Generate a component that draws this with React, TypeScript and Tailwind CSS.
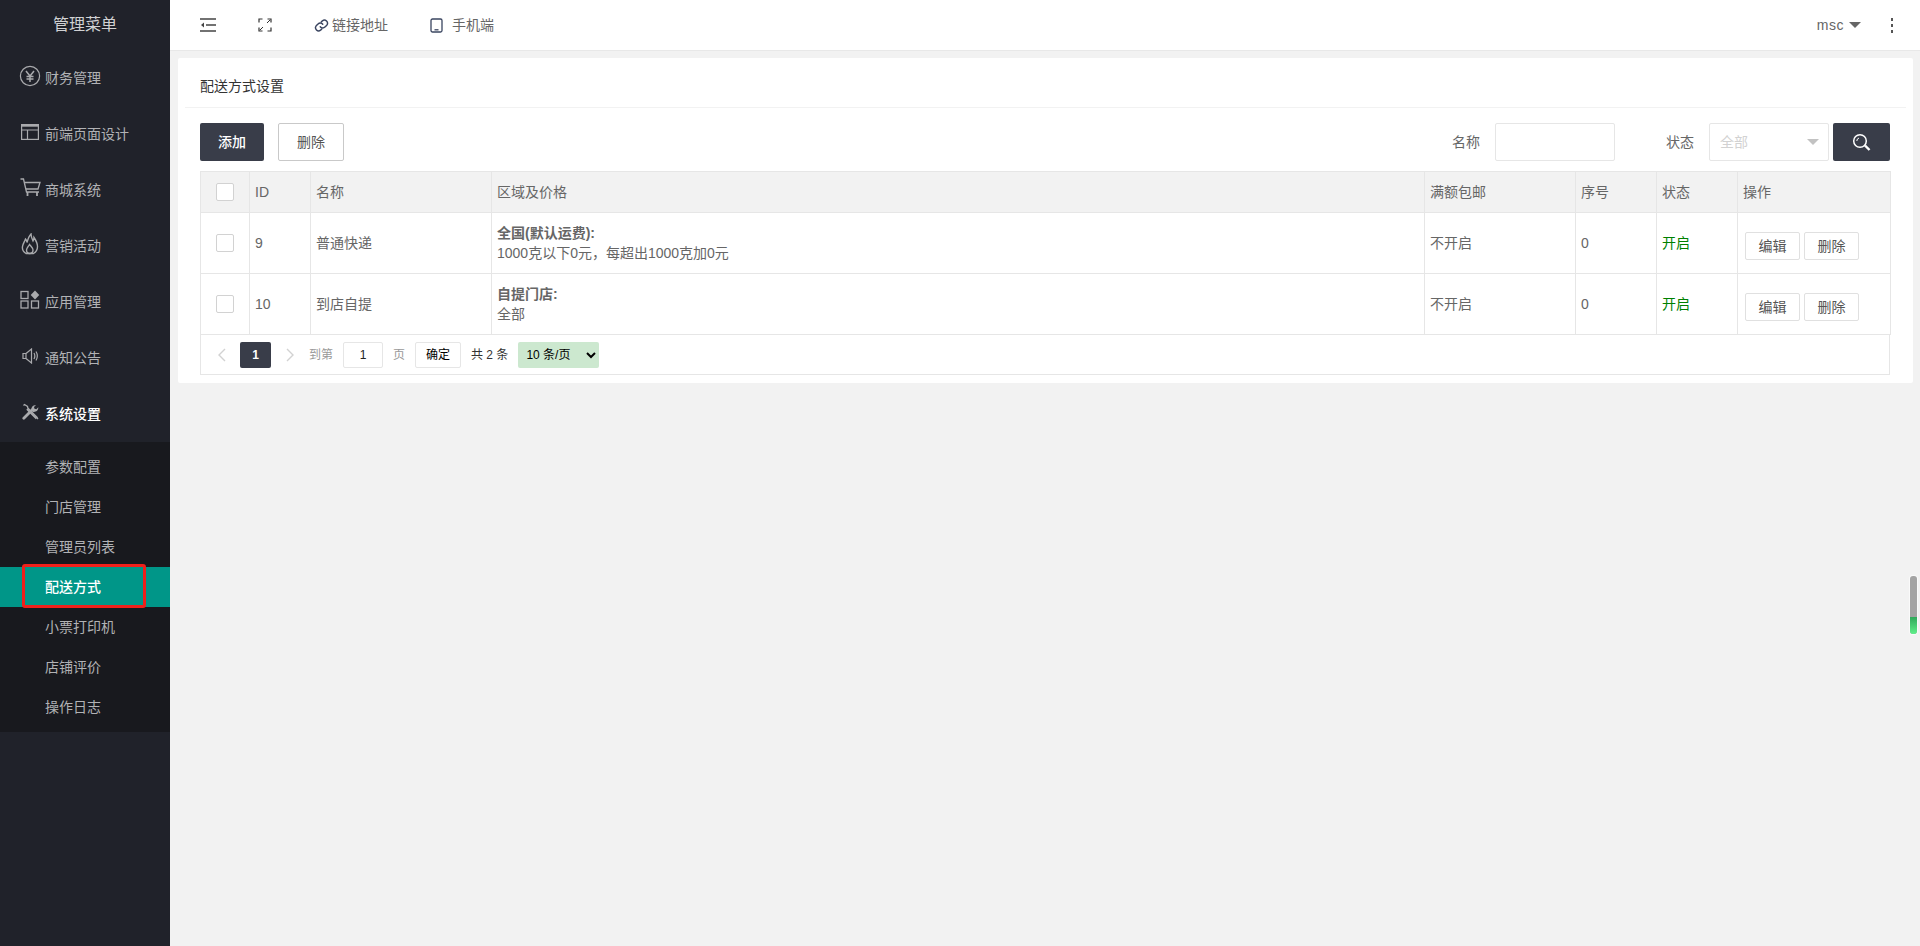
import * as React from "react";

const icons: Record<string, React.ReactNode> = {
  yen: (
    <svg width="22" height="22" viewBox="0 0 22 22" fill="none" stroke="currentColor" strokeWidth="1.2">
      <circle cx="11" cy="11" r="9.6" />
      <path d="M7 6l4 5 4-5M11 11v6M7.5 11.5h7M7.5 14h7" strokeWidth="1.5" />
    </svg>
  ),
  window: (
    <svg width="20" height="18" viewBox="0 0 20 18" fill="none" stroke="currentColor" strokeWidth="1.2">
      <rect x="1.6" y="1.6" width="16.8" height="14.8" />
      <path d="M1.6 2.5h16.8" strokeWidth="2.4" />
      <path d="M1.6 7h16.8M7.5 7v9.4" />
    </svg>
  ),
  cart: (
    <svg width="21" height="19" viewBox="0 0 21 19" fill="none" stroke="currentColor" strokeWidth="1.3">
      <path d="M0.5 1h3l3 13h12.500" />
      <path d="M4.500 4.500H20l-2 6.500H6" />
      <path d="M7.500 14v4M17 14v4" strokeWidth="1.800" />
    </svg>
  ),
  flame: (
    <svg width="18" height="22" viewBox="0 0 18 22" fill="none" stroke="currentColor" strokeWidth="1.4">
      <path d="M5 20.500C2.500 19 1 16.500 1.500 13.500 2 10.500 3.500 9 4.500 6c1 1 1.500 2 1.500 3.500C7 6 8 3 10 1c0 3 1 5 2 7 .5-1 1-2 1-3.500 2 3 3.500 5.500 3.500 9 0 3-1.500 5.500-4 7z" />
      <path d="M5.500 17c0-2 1.500-3 3-5.500 1.500 2 3.500 3.500 3.500 5.500 0 2-1.500 3.500-3.300 3.500S5.500 19 5.500 17z" />
    </svg>
  ),
  apps: (
    <svg width="20" height="19" viewBox="0 0 20 19" fill="none" stroke="currentColor" strokeWidth="1.3">
      <rect x="1" y="1.500" width="7" height="7" />
      <rect x="1" y="11" width="7" height="7" />
      <rect x="11.500" y="11" width="7" height="7" />
      <path d="M15 .5l4.300 4.500L15 9.500 10.700 5z" fill="currentColor" stroke="none" />
    </svg>
  ),
  speaker: (
    <svg width="16" height="16" viewBox="0 0 16 16" fill="none" stroke="currentColor" strokeWidth="1.2">
      <path d="M1 5.500h3v5H1zM4 5.500L9.500 1v14L4 10.500" />
      <path d="M12 5c1 1.800 1 4.200 0 6M14 3.500c1.600 2.700 1.600 6.300 0 9" />
    </svg>
  ),
  tools: (
    <svg width="17" height="17" viewBox="0 0 17 17" fill="none" stroke="currentColor">
      <path d="M1.500 2.500l1-1 3 2 .3 1.500 9.700 9.700" strokeWidth="1.300" />
      <path d="M5 6l9.500 9.500M14.800 15.800l1-1" strokeWidth="2" />
      <path d="M1.800 15.200L10 7" strokeWidth="2.800" strokeLinecap="round" />
      <path d="M9.500 7.500c-.8-2.500 1.200-5.500 4.500-5.500l-2 2 .5 1.800 1.800.5 2-2c.2 3.300-3 5.300-5.500 4.500" fill="currentColor" stroke="none" />
    </svg>
  ),
};

const mainMenu = [
  { icon: "yen", label: "财务管理" },
  { icon: "window", label: "前端页面设计" },
  { icon: "cart", label: "商城系统" },
  { icon: "flame", label: "营销活动" },
  { icon: "apps", label: "应用管理" },
  { icon: "speaker", label: "通知公告" },
  { icon: "tools", label: "系统设置", active: true },
];

const subMenu = ["参数配置", "门店管理", "管理员列表", "配送方式", "小票打印机", "店铺评价", "操作日志"];

const rows = [
  { id: 9, name: "普通快递", region: "全国(默认运费):", price: "1000克以下0元，每超出1000克加0元" },
  { id: 10, name: "到店自提", region: "自提门店:", price: "全部" },
];

function Checkbox() {
  return <div className="mx-auto h-[18px] w-[18px] rounded-[2px] border border-[#d2d2d2] bg-white" />;
}

function Sidebar() {
  return (
    <aside className="flex w-[170px] shrink-0 flex-col bg-[#20222a] text-[14px]">
      <div className="flex h-[50px] items-center justify-center text-[16px] text-[#d0d1d3]">管理菜单</div>
      {mainMenu.map((item) => (
        <div
          key={item.label}
          className={`flex h-[56px] items-center ${item.active ? "font-medium text-white" : "text-[#b1b2b5]"}`}
        >
          <span className="mb-[5px] flex w-[45px] justify-end pr-[4px] text-[#a9aaad]">
            <span className="flex w-[22px] justify-center">{icons[item.icon]}</span>
          </span>
          {item.label}
        </div>
      ))}
      <div className="bg-[#18191e] py-[5px]">
        {subMenu.map((label) => {
          const current = label === "配送方式";
          return (
            <div
              key={label}
              className={`relative flex h-[40px] items-center pl-[45px] ${current ? "bg-[#009688] font-medium text-white" : "text-[#b1b2b5]"}`}
            >
              {label}
              {current && (
                <span className="absolute -top-[3px] -bottom-[1px] left-[22px] w-[124px] rounded-[3px] border-[3px] border-[#f0201a]" />
              )}
            </div>
          );
        })}
      </div>
    </aside>
  );
}

function Topbar() {
  return (
    <header className="flex h-[51px] shrink-0 items-center border-b border-[#e8e8e8] bg-white pl-[30px] pr-[27px] text-[14px] text-[#666]">
      <svg width="16" height="14" viewBox="0 0 16 14" fill="none" stroke="#444" strokeWidth="1.4">
        <path d="M0 1h16M6 7h10M0 13h16" />
        <path d="M4 4.500L1 7l3 2.500z" fill="#444" stroke="none" />
      </svg>
      <svg className="ml-[42px]" width="14" height="14" viewBox="0 0 14 14" fill="none" stroke="#333" strokeWidth="1.2">
        <path d="M1 4.500V1h3.500M9.500 1H13v3.500M13 9.500V13H9.500M4.500 13H1V9.500" />
        <path d="M9 5l3-3M5 9l-3 3" strokeWidth="1" />
      </svg>
      <svg className="ml-[42px]" width="15" height="15" viewBox="0 0 24 24" fill="none" stroke="#3a4560" strokeWidth="2.300" strokeLinecap="round">
        <path d="M10 14a5 5 0 0 0 7.500.5l3-3a5 5 0 0 0-7-7l-1.700 1.700" />
        <path d="M14 10a5 5 0 0 0-7.500-.5l-3 3a5 5 0 0 0 7 7l1.700-1.700" />
      </svg>
      <span className="ml-[3px]">链接地址</span>
      <svg className="ml-[42px]" width="13" height="15" viewBox="0 0 13 15" fill="none" stroke="#3a4560" strokeWidth="1.3">
        <rect x="1" y="1" width="11" height="13" rx="1.500" />
        <path d="M4.500 11.800h4" />
      </svg>
      <span className="ml-[9px]">手机端</span>
      <span className="ml-auto tracking-[0.5px]">msc</span>
      <span className="ml-[5px] h-0 w-0 border-x-[6px] border-t-[6px] border-x-transparent border-t-[#666]" />
      <span className="ml-[30px] flex flex-col gap-[3px]">
        <span className="h-[3px] w-[2px] bg-[#555]" />
        <span className="h-[3px] w-[2px] bg-[#555]" />
        <span className="h-[3px] w-[2px] bg-[#555]" />
      </span>
    </header>
  );
}

function Toolbar() {
  return (
    <div className="mt-[15px] flex h-[38px] items-center pl-[22px] pr-[23px] text-[14px]">
      <button className="h-full w-[64px] rounded-[2px] bg-[#393d49] font-medium text-white">添加</button>
      <button className="ml-[14px] h-full w-[66px] rounded-[2px] border border-[#c9c9c9] bg-white text-[#555]">删除</button>
      <span className="ml-auto text-[#666]">名称</span>
      <input className="ml-[15px] h-full w-[120px] rounded-[2px] border border-[#e6e6e6] bg-white" />
      <span className="ml-[51px] text-[#666]">状态</span>
      <div className="relative ml-[15px] flex h-full w-[120px] items-center rounded-[2px] border border-[#e6e6e6] bg-white pl-[10px] text-[#d2d2d2]">
        全部
        <span className="absolute right-[9px] top-[15px] h-0 w-0 border-x-[6px] border-t-[6px] border-x-transparent border-t-[#c2c2c2]" />
      </div>
      <button className="ml-[4px] flex h-full w-[57px] items-center justify-center rounded-[2px] bg-[#393d49]">
        <svg width="20" height="19" viewBox="0 0 20 19" fill="none" stroke="#fff">
          <circle cx="8" cy="8" r="6.300" strokeWidth="1.500" />
          <path d="M13 12.500l4.500 4.500" strokeWidth="2.400" />
          <path d="M4.800 8a3.200 3.200 0 0 1 2.200-3" strokeWidth="1" />
        </svg>
      </button>
    </div>
  );
}

function Pagination() {
  return (
    <div className="flex h-[40px] items-center border-x border-b border-[#e6e6e6] pl-[15px] text-[12px]">
      <svg width="12" height="14" viewBox="0 0 12 14" fill="none" stroke="#d2d2d2" strokeWidth="1.400">
        <path d="M9 1L3 7l6 6" />
      </svg>
      <span className="ml-[12px] flex h-[26px] w-[31px] items-center justify-center rounded-[2px] bg-[#393d49] font-bold text-white">1</span>
      <svg className="ml-[13px]" width="12" height="14" viewBox="0 0 12 14" fill="none" stroke="#d2d2d2" strokeWidth="1.400">
        <path d="M3 1l6 6-6 6" />
      </svg>
      <span className="ml-[13px] text-[#999]">到第</span>
      <input
        defaultValue="1"
        className="ml-[10px] h-[26px] w-[40px] rounded-[2px] border border-[#e6e6e6] text-center text-[12px] text-[#222]"
      />
      <span className="ml-[10px] text-[#999]">页</span>
      <button className="ml-[10px] h-[26px] w-[46px] rounded-[2px] border border-[#e6e6e6] bg-white text-black">确定</button>
      <span className="ml-[10px] text-[#333]">共 2 条</span>
      <select className="ml-[10px] h-[26px] w-[81px] rounded-[2px] bg-[#cce8cf] pl-[4px] text-[12px] text-black">
        <option>10 条/页</option>
      </select>
    </div>
  );
}

function DeliveryTable() {
  const th = "border border-[#e6e6e6] px-[5px] text-left font-normal";
  const td = "border border-[#e6e6e6] px-[5px]";
  return (
    <div className="ml-[22px] mt-[10px] w-[1690px] text-[14px] leading-[20px] text-[#666]">
      <table className="w-full table-fixed border-collapse">
        <colgroup>
          <col className="w-[49px]" />
          <col className="w-[61px]" />
          <col className="w-[181px]" />
          <col className="w-[933px]" />
          <col className="w-[151px]" />
          <col className="w-[81px]" />
          <col className="w-[81px]" />
          <col className="w-[153px]" />
        </colgroup>
        <thead>
          <tr className="h-[41px] bg-[#f2f2f2]">
            <th className={th}>
              <Checkbox />
            </th>
            <th className={th}>ID</th>
            <th className={th}>名称</th>
            <th className={th}>区域及价格</th>
            <th className={th}>满额包邮</th>
            <th className={th}>序号</th>
            <th className={th}>状态</th>
            <th className={th}>操作</th>
          </tr>
        </thead>
        <tbody>
          {rows.map((row) => (
            <tr key={row.id} className="h-[61px]">
              <td className={td}>
                <Checkbox />
              </td>
              <td className={td}>{row.id}</td>
              <td className={td}>{row.name}</td>
              <td className={td}>
                <div className="font-bold">{row.region}</div>
                <div>{row.price}</div>
              </td>
              <td className={td}>不开启</td>
              <td className={td}>0</td>
              <td className={`${td} text-[#008000]`}>开启</td>
              <td className={td}>
                <div className="ml-[2px] mt-[6px] flex gap-[4px]">
                  <button className="h-[28px] w-[55px] rounded-[2px] border border-[#e0e0e0] bg-white text-[#555]">编辑</button>
                  <button className="h-[28px] w-[55px] rounded-[2px] border border-[#e0e0e0] bg-white text-[#555]">删除</button>
                </div>
              </td>
            </tr>
          ))}
        </tbody>
      </table>
      <Pagination />
    </div>
  );
}

export default function App() {
  return (
    <div className="flex h-screen overflow-hidden bg-[#f2f2f2] [font-family:'Liberation_Sans','Noto_Sans_CJK_SC',sans-serif]">
      <Sidebar />
      <main className="relative flex min-w-0 flex-1 flex-col">
        <Topbar />
        <div className="pl-[8px] pr-[7px] pt-[7px]">
          <section className="h-[325px] rounded-[2px] bg-white">
            <div className="mx-[7px] flex h-[50px] items-center border-b border-[#f2f2f2] pl-[15px] pt-[7px] text-[14px] text-[#333]">
              配送方式设置
            </div>
            <Toolbar />
            <DeliveryTable />
          </section>
        </div>
        {/* volume style widget floating over the page */}
        <div className="absolute left-[1740px] top-[576px] flex h-[58px] w-[7px] flex-col justify-end overflow-hidden rounded-[3px] bg-[#a3a3a3] ring-1 ring-white/60">
          <div className="h-[17px] bg-gradient-to-b from-[#2fa85a] to-[#5ff08a]" />
        </div>
      </main>
    </div>
  );
}
